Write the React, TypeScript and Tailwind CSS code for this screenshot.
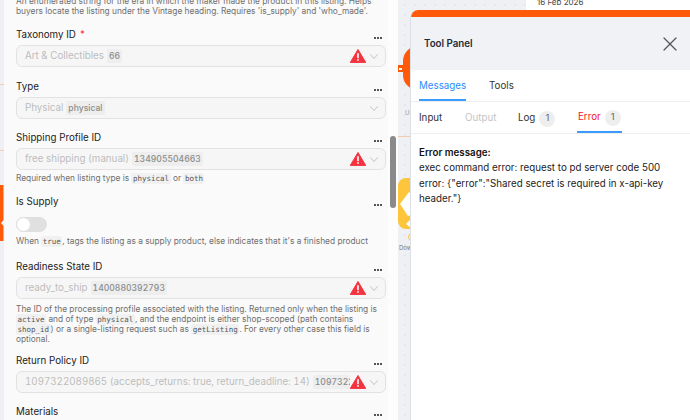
import type { ReactNode } from "react";
import { X } from "lucide-react";

const Warn = () => (
  <svg width="16" height="14" viewBox="0 0 16 14" className="shrink-0">
    <path d="M8 0.5 L15.8 13.6 L0.2 13.6 Z" fill="#f5333f" stroke="#f5333f" strokeLinejoin="round" />
    <rect x="7.2" y="4.2" width="1.6" height="5" fill="#fff" />
    <rect x="7.2" y="10.2" width="1.6" height="1.6" fill="#fff" />
  </svg>
);

const Chevron = () => (
  <svg width="8" height="5" viewBox="0 0 8 5" fill="none" stroke="#b5b5b5" strokeWidth="0.8" className="shrink-0">
    <path d="M0.4 0.4 L4 4.6 L7.6 0.4" />
  </svg>
);

const Dots = () => (
  <div className="flex gap-[1px] pt-[6px] pr-[4px]">
    <span className="size-[2px] bg-[#555]" />
    <span className="size-[2px] bg-[#555]" />
    <span className="size-[2px] bg-[#555]" />
  </div>
);

const Code = ({ children }: { children: ReactNode }) => (
  <code className="rounded-[2px] bg-[#f1f1f1] px-[1.5px] py-[1px] font-['DejaVu_Sans_Mono',monospace] text-[7.5px] leading-[8px] text-[#555]">{children}</code>
);

const Label = ({ children, required }: { children: ReactNode; required?: boolean }) => (
  <div className="flex h-[14px] items-center justify-between text-[9.75px] leading-[14px] text-[#222]">
    <span>
      {children}
      {required && <span className="ml-[4px] text-[#f5333f]">*</span>}
    </span>
    <Dots />
  </div>
);

const Select = ({ text, tag, warn }: { text: string; tag: string; warn?: boolean }) => (
  <div className="mt-[3px] flex h-[22px] items-center rounded-[6px] border border-[#e2e2e2] bg-[#f6f6f6] pl-[8px] pr-[7px] text-[9.75px] text-[#bdbdbd] tabular-nums">
    <div className="flex min-w-0 flex-1 items-center overflow-hidden">
      <span className="whitespace-nowrap">{text}</span>
      <span className="ml-[3px] rounded-[2px] bg-[#eeeeee] px-[2px] py-[1px] text-[8.6px] font-medium whitespace-nowrap text-[#8c8c8c]">{tag}</span>
    </div>
    <div className="flex items-center gap-[4px]">
      {warn && <Warn />}
      <Chevron />
    </div>
  </div>
);

const Help = ({ children, top = "mt-[3px]" }: { children: ReactNode; top?: string }) => (
  <p className={`${top} text-[8.33px] leading-[10px] text-[#6f6f6f]`}>{children}</p>
);

export default function App() {
  return (
    <div className="relative flex h-[420px] w-[690px] overflow-hidden bg-[#eef0f4] bg-[radial-gradient(#d9dce3_0.6px,transparent_0.8px)] bg-[size:10px_10px] font-['Inter',sans-serif]">
      {/* canvas nodes behind the panels */}
      <div className="absolute top-[84px] left-0 h-[1px] w-[4px] bg-[#f6c9a8]" />
      <div className="absolute top-[150px] left-0 h-[1px] w-[4px] bg-[#f6c9a8]" />
      <svg width="4" height="56" viewBox="0 0 4 56" className="absolute top-[185px] left-0">
        <path d="M0 0 H3.5 V35 L1 38 L3.5 41 V56 H0 Z" fill="#ff5a0a" />
      </svg>
      <div className="absolute top-[46px] left-[403px] h-[44px] w-[30px] rounded-full bg-[#ff5a0a]" />
      <div className="absolute top-[65px] left-[398px] h-[7px] w-[6px] bg-[#ff5a0a]" />
      <div className="absolute top-[68px] left-[399px] h-[2px] w-[3px] bg-white" />
      <div className="absolute top-[136px] left-[398px] h-[1px] w-[14px] bg-[#f6c9a8]" />
      <div className="absolute top-[178px] left-[398px] h-[51px] w-[40px] rounded-l-[8px] bg-[#fcc53c]" />
      <svg width="13" height="40" viewBox="0 0 13 40" className="absolute top-[190px] left-[398px]">
        <path d="M2 14 L11 2 L13 4 L13 25 L10 26 Z" fill="#fff" />
        <path d="M8 34 L13 29 L13 38 Z" fill="#fff" />
      </svg>
      <div className="absolute top-[233px] left-[408px] size-[8px] rounded-full border border-[#fcc53c]" />
      <span className="absolute top-[108px] left-[405px] text-[6px] text-[#9a9a9a]">Us</span>
      <span className="absolute top-[243px] left-[399px] text-[6px] text-[#777]">Down</span>
      <div className="absolute top-0 left-[526px] h-[10px] w-[164px] bg-white pl-[11px] text-[8px] leading-[4px] text-[#444]">16 Feb 2026</div>

      {/* form panel */}
      <div className="relative ml-[4px] h-full w-[394px] shrink-0 overflow-hidden bg-[#fdfdfd]">
        <div className="flex h-full w-[384px] flex-col bg-[#fafafa] pr-[2px] pl-[12px]">
          <p className="-mt-[4px] text-[8.33px] leading-[10px] text-[#6f6f6f]">
            An enumerated string for the era in which the maker made the product in this listing. Helps buyers locate the listing under the Vintage heading. Requires 'is_supply' and 'who_made'.
          </p>
          <div className="mt-[12px]">
            <Label required>Taxonomy ID</Label>
            <Select text="Art & Collectibles" tag="66" warn />
          </div>
          <div className="mt-[13px]">
            <Label>Type</Label>
            <Select text="Physical" tag="physical" />
          </div>
          <div className="mt-[12px]">
            <Label>Shipping Profile ID</Label>
            <Select text="free shipping (manual)" tag="134905504663" warn />
            <Help>
              Required when listing type is <Code>physical</Code> or <Code>both</Code>
            </Help>
          </div>
          <div className="mt-[12px]">
            <Label>Is Supply</Label>
            <div className="mt-[8px] flex h-[15px] w-[31px] items-center rounded-full bg-[#e0e0e0]">
              <span className="size-[15px] rounded-full border border-[#ddd] bg-white" />
            </div>
            <Help top="mt-[4px]">
              When <Code>true</Code>, tags the listing as a supply product, else indicates that it's a finished product
            </Help>
          </div>
          <div className="mt-[14px]">
            <Label>Readiness State ID</Label>
            <Select text="ready_to_ship" tag="1400880392793" warn />
            <Help top="mt-[5px]">
              The ID of the processing profile associated with the listing. Returned only when the listing is <Code>active</Code> and of type <Code>physical</Code>, and the endpoint is either shop-scoped (path contains <Code>shop_id</Code>) or a single-listing request such as <Code>getListing</Code>. For every other case this field is optional.
            </Help>
          </div>
          <div className="mt-[10px]">
            <Label>Return Policy ID</Label>
            <Select text="1097322089865 (accepts_returns: true, return_deadline: 14)" tag="1097322089865" warn />
          </div>
          <div className="mt-[12px]">
            <Label>Materials</Label>
          </div>
        </div>
        <div className="absolute top-[136px] right-[2px] h-[72px] w-[6px] rounded-full bg-[#8a8a8a]" />
      </div>

      {/* tool panel */}
      <div className="absolute top-[10px] left-[410px] flex h-[410px] w-[280px] flex-col overflow-hidden rounded-tl-[8px] border-l border-[#dcdfe5] bg-white">
        <div className="h-[7px] bg-[#ff5a0a]" />
        <div className="flex h-[53px] items-center justify-between bg-[#f0f2f5] pr-[8px] pl-[13px]">
          <span className="pt-[2px] text-[9.75px] font-semibold text-[#1f2937]">Tool Panel</span>
          <X size={24} strokeWidth={1.25} className="text-[#555]" />
        </div>
        <div className="flex h-[32px] gap-[23px] border-b border-[#eeeeee] px-[8px] text-[9.75px]">
          <div className="flex items-center border-b-[2px] border-[#3b9bff] pt-[3px] text-[#2a8cff]">Messages</div>
          <div className="flex items-center pt-[3px] pb-[2px] text-[#333]">Tools</div>
        </div>
        <div className="flex h-[32px] border-b border-[#eeeeee] pl-[8px] text-[9.75px]">
          <div className="flex w-[46px] items-center pt-[2px] text-[#333]">Input</div>
          <div className="flex w-[53px] items-center pt-[2px] text-[#c4c4c4]">Output</div>
          <div className="flex w-[59px] items-center pt-[2px] text-[#333]">
            Log
            <span className="ml-[4px] flex size-[16px] items-center justify-center rounded-full bg-[#eeeeee] text-[9.5px] text-[#666]">1</span>
          </div>
          <div className="flex items-center border-b-[2px] border-[#3b9bff] px-[1px] pt-[2px] text-[#f5141e]">
            Error
            <span className="ml-[4px] flex size-[16px] items-center justify-center rounded-full bg-[#eeeeee] text-[9.5px] text-[#666]">1</span>
          </div>
        </div>
        <div className="px-[8px] pt-[11px] text-[9.75px] leading-[15.3px] text-[#222]">
          <div className="font-semibold text-[#111]">Error message:</div>
          <div>exec command error: request to pd server code 500 error: {'{"error":"Shared secret is required in x-api-key header."}'}</div>
        </div>
      </div>
    </div>
  );
}
